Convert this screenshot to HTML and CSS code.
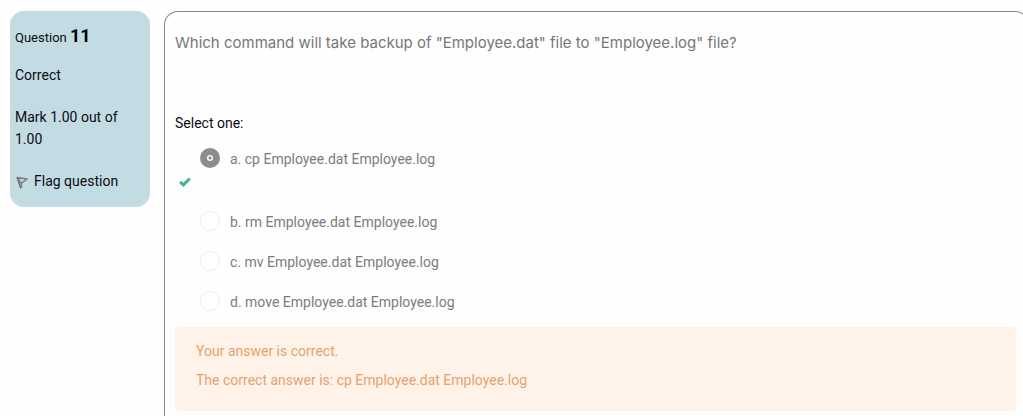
FILE: index.html
```html
<!DOCTYPE html>
<html lang="en">
<head>
<meta charset="utf-8">
<meta name="viewport" content="width=device-width, initial-scale=1">
<title>Question 11</title>
<link rel="stylesheet" href="styles.css">
</head>
<body>
<div class="question">
  <aside class="info">
    <h3 class="number">Question <span class="qno">11</span></h3>
    <div class="state">Correct</div>
    <div class="grade">Mark 1.00 out of 1.00</div>
    <button class="flag" type="button">
      <svg class="flag-icon" viewBox="0 0 12 13" aria-hidden="true">
        <path d="M1 1.5 11 3 5.2 7.5zM1 1.5 4.8 12.5M5.2 7.5 5.6 12" fill="none" stroke="#77777c" stroke-width="1.4" stroke-linejoin="round"/>
        <path d="M3.5 3.5 8 4 5 6z" fill="#bcc9cc"/>
      </svg>
      <span>Flag question</span>
    </button>
  </aside>
  <main class="content">
    <p class="qtext">Which command will take backup of "Employee.dat" file to "Employee.log" file?</p>
    <fieldset class="answers">
      <legend class="prompt">Select one:</legend>
      <div class="answer answer-chosen">
        <label class="choice"><input class="radio" type="radio" name="answer" checked><span>a. cp Employee.dat Employee.log</span></label>
        <svg class="tick" viewBox="0 0 12 10" role="img" aria-label="Correct">
          <path d="M1.2 4.8 4.4 7.8 10.8 1.5" fill="none" stroke="#4eb288" stroke-width="3.1"/>
        </svg>
      </div>
      <div class="answer"><label class="choice"><input class="radio" type="radio" name="answer"><span>b. rm Employee.dat Employee.log</span></label></div>
      <div class="answer"><label class="choice"><input class="radio" type="radio" name="answer"><span>c. mv Employee.dat Employee.log</span></label></div>
      <div class="answer"><label class="choice"><input class="radio" type="radio" name="answer"><span>d. move Employee.dat Employee.log</span></label></div>
    </fieldset>
    <section class="feedback">
      <p class="feedback-line">Your answer is correct.</p>
      <p class="feedback-line">The correct answer is: cp Employee.dat Employee.log</p>
    </section>
  </main>
</div>
</body>
</html>
```
FILE: styles.css
```css
* {
  box-sizing: border-box;
}

body {
  margin: 0;
  overflow-x: hidden;
  background: #fefefe;
  color: #0b0b12;
  font: 14px/22px Roboto, "Noto Sans", sans-serif;
}

.question {
  display: flex;
  align-items: stretch;
  gap: 14px;
  min-height: 100vh;
  margin-right: -6px;
  padding: 11px 0 0 10px;
}

.info {
  flex: 0 0 140px;
  align-self: flex-start;
  padding: 14px 5px 15px;
  border-radius: 14px;
  background: #c3dbe2;
}

.number {
  margin: 0 0 15px;
  font-size: 13px;
  font-weight: 400;
}

.qno {
  color: #000;
  font-size: 18px;
  font-weight: 700;
}

.state {
  margin-bottom: 20px;
}

.grade {
  margin-bottom: 20px;
  padding-right: 16px;
}

.flag {
  display: flex;
  align-items: center;
  gap: 6px;
  padding: 0;
  border: 0;
  background: none;
  color: inherit;
  font: inherit;
  cursor: pointer;
}

.flag-icon {
  width: 12px;
  height: 13px;
  margin: 3px 0 0 1px;
}

.content {
  flex: 1;
  min-width: 0;
  padding: 20px 12px 0 10px;
  border: 1px solid #7d8b8f;
  border-bottom: 0;
  border-radius: 14px 14px 0 0;
}

.qtext {
  margin: 0 0 58px;
  color: #777;
  font-family: Inter, Roboto, sans-serif;
  font-size: 15px;
}

.answers {
  margin: 0;
  padding: 0;
  border: 0;
}

.prompt {
  padding: 0;
}

.answer {
  display: flex;
  align-items: flex-start;
  height: 40px;
  padding: 15px 0 0 25px;
}

.answer-chosen {
  flex-direction: column;
  height: 62px;
  padding-top: 14px;
}

.choice {
  display: flex;
  align-items: flex-start;
  gap: 10px;
  color: #7c7c7c;
}

.radio {
  width: 20px;
  height: 20px;
  margin: 0;
  border: 1px solid #eee;
  border-radius: 50%;
  background: #fff;
  appearance: none;
}

.radio:checked {
  border: 7px solid #8c8c8c;
  background: radial-gradient(circle, #8c8c8c 1px, #fff 2px);
}

.tick {
  width: 12px;
  height: 10px;
  margin: 7px 0 0 -21px;
}

.feedback {
  margin-top: 11px;
  padding: 13px 21px 20px;
  border-radius: 3px;
  background: #fff3e9;
  color: #e5a26c;
}

.feedback-line {
  margin: 0 0 7px;
}

.feedback-line:last-child {
  margin-bottom: 0;
}
```
